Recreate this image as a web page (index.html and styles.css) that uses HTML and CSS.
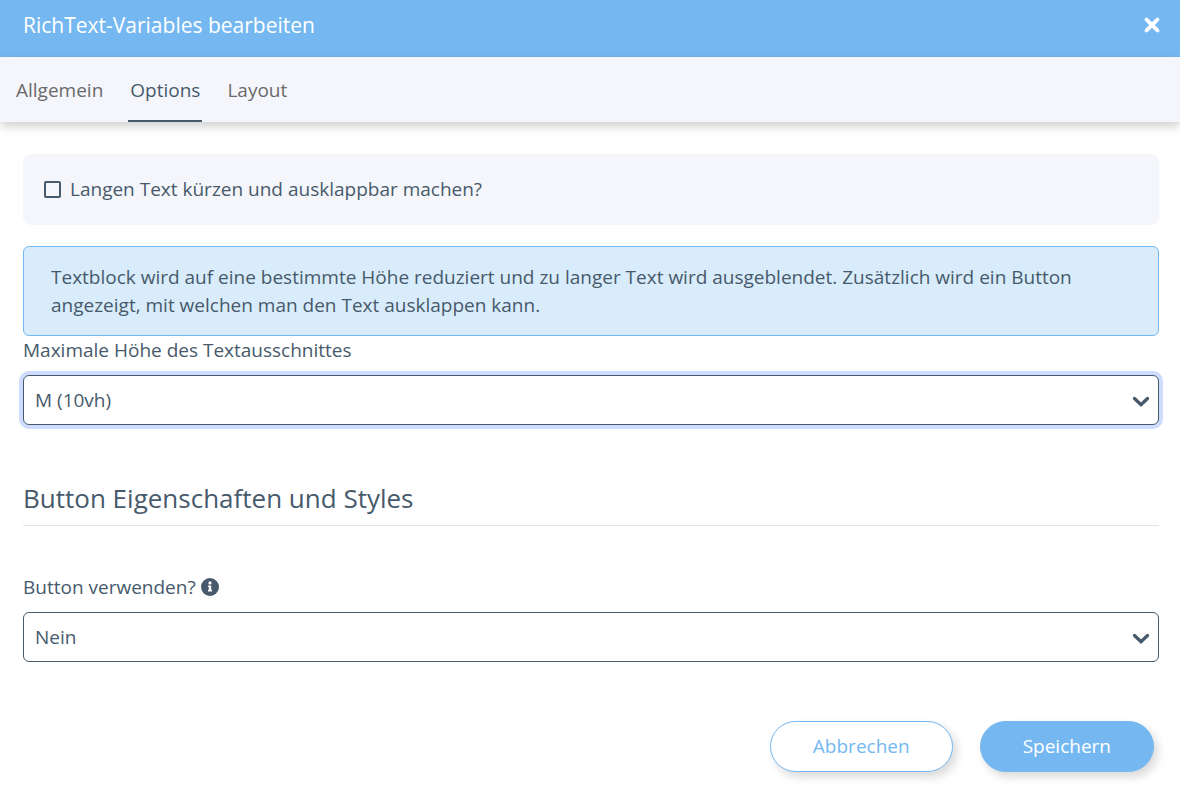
FILE: index.html
```html
<!DOCTYPE html>
<html lang="de">
<head>
<meta charset="utf-8">
<meta name="viewport" content="width=device-width, initial-scale=1">
<title>RichText-Variables bearbeiten</title>
<link rel="stylesheet" href="styles.css">
</head>
<body>
<header class="dialog-header">
  <h1 class="dialog-title">RichText-Variables bearbeiten</h1>
  <button class="close-button" type="button" aria-label="Schließen">
    <svg width="16" height="16" viewBox="0 0 16 16" aria-hidden="true"><path d="M2.6 2.6 13.4 13.4M13.4 2.6 2.6 13.4" fill="none" stroke="currentColor" stroke-width="3.8" stroke-linecap="round"/></svg>
  </button>
</header>
<nav class="tabs">
  <a class="tab" href="#allgemein">Allgemein</a>
  <a class="tab tab-active" href="#options" aria-current="page">Options</a>
  <a class="tab" href="#layout">Layout</a>
</nav>
<main>
  <form class="form">
    <label class="check-card">
      <input class="checkbox" type="checkbox">
      <span>Langen Text kürzen und ausklappbar machen?</span>
    </label>
    <p class="notice">Textblock wird auf eine bestimmte Höhe reduziert und zu langer Text wird ausgeblendet. Zusätzlich wird ein Button angezeigt, mit welchen man den Text ausklappen kann.</p>
    <label class="label" for="max-height">Maximale Höhe des Textausschnittes</label>
    <div class="select-wrap">
      <select class="select select-focused" id="max-height"><option>M (10vh)</option></select>
      <svg class="chevron" width="18" height="12" viewBox="0 0 18 12" aria-hidden="true"><path d="M2.5 2.5 9 8.8 15.5 2.5" fill="none" stroke="currentColor" stroke-width="3.3" stroke-linecap="round"/></svg>
    </div>
    <h2 class="section-title">Button Eigenschaften und Styles</h2>
    <div class="label-row">
      <label class="label" for="use-button">Button verwenden?</label>
      <svg class="info" width="18" height="18" viewBox="0 0 18 18" aria-hidden="true"><circle cx="9" cy="9" r="9" fill="currentColor"/><circle cx="9" cy="4.9" r="1.6" fill="#fff"/><path d="M7 7.4h3.2v4.4H11v1.7H7v-1.7h.8V9.1H7z" fill="#fff"/></svg>
    </div>
    <div class="select-wrap">
      <select class="select" id="use-button"><option>Nein</option></select>
      <svg class="chevron" width="18" height="12" viewBox="0 0 18 12" aria-hidden="true"><path d="M2.5 2.5 9 8.8 15.5 2.5" fill="none" stroke="currentColor" stroke-width="3.3" stroke-linecap="round"/></svg>
    </div>
    <div class="actions">
      <button class="button button-outline" type="button">Abbrechen</button>
      <button class="button button-primary" type="submit">Speichern</button>
    </div>
  </form>
</main>
</body>
</html>
```
FILE: styles.css
```css
* {
  box-sizing: border-box;
}

body {
  margin: 0;
  background: #fff;
  color: #475a6c;
  font-family: "Open Sans", sans-serif;
  font-size: 19px;
  line-height: 28px;
}

.dialog-header {
  display: flex;
  align-items: center;
  justify-content: space-between;
  padding: 10px 20px 17px 23px;
  background: #75b8f1;
  color: #fff;
}

.dialog-title {
  margin: 0;
  font-size: 21px;
  line-height: 30px;
  font-weight: 400;
}

.close-button {
  display: flex;
  padding: 0;
  border: 0;
  background: none;
  color: inherit;
}

.tabs {
  display: flex;
  gap: 23px;
  padding: 0 14px;
  background: #f5f6fb;
  box-shadow: 0 4px 10px rgba(0, 0, 0, 0.2);
}

.tab {
  padding: 19px 2px 16px;
  border-bottom: 2px solid transparent;
  color: #6a6a6a;
  text-decoration: none;
}

.tab-active {
  border-color: #475a6c;
  color: #475a6c;
}

.form {
  display: flex;
  flex-direction: column;
  padding: 32px 21px 28px 23px;
}

.check-card {
  display: flex;
  align-items: center;
  gap: 9px;
  padding: 21px 21px 22px;
  border-radius: 8px;
  background: #f5f6fb;
}

.checkbox {
  appearance: none;
  width: 17px;
  height: 17px;
  margin: 0;
  border: 2px solid #475a6c;
  border-radius: 2px;
}

.notice {
  margin: 21px 0 0;
  padding: 16px 27px;
  border: 1px solid #75b8f1;
  border-radius: 6px;
  background: #d9ecfb;
}

.label {
  display: block;
}

.select-wrap {
  display: grid;
  align-items: center;
  margin-top: 11px;
}

.select {
  grid-area: 1 / 1;
  appearance: none;
  width: 100%;
  height: 50px;
  padding: 0 11px;
  border: 1px solid #475a6c;
  border-radius: 6px;
  background: #fff;
  color: inherit;
  font: inherit;
}

.select-focused {
  box-shadow: 0 0 0 4px #cddcff;
}

.chevron {
  grid-area: 1 / 1;
  justify-self: end;
  margin: 4px 9px 0 0;
  pointer-events: none;
}

.section-title {
  margin: 55px 0 47px;
  padding-bottom: 9px;
  border-bottom: 1px solid #e2e4e6;
  font-size: 26px;
  line-height: 36px;
  font-weight: 500;
}

.label-row {
  display: flex;
  align-items: center;
  gap: 5px;
}

.actions {
  display: flex;
  justify-content: flex-end;
  gap: 27px;
  margin: 59px 5px 0 0;
}

.button {
  height: 51px;
  padding: 0 42px 1px;
  border: 1px solid #75b8f1;
  border-radius: 26px;
  box-shadow: 4px 5px 10px rgba(0, 0, 0, 0.15);
  font: inherit;
}

.button-outline {
  background: #fff;
  color: #75b8f1;
}

.button-primary {
  background: #75b8f1;
  color: #fff;
}
```
